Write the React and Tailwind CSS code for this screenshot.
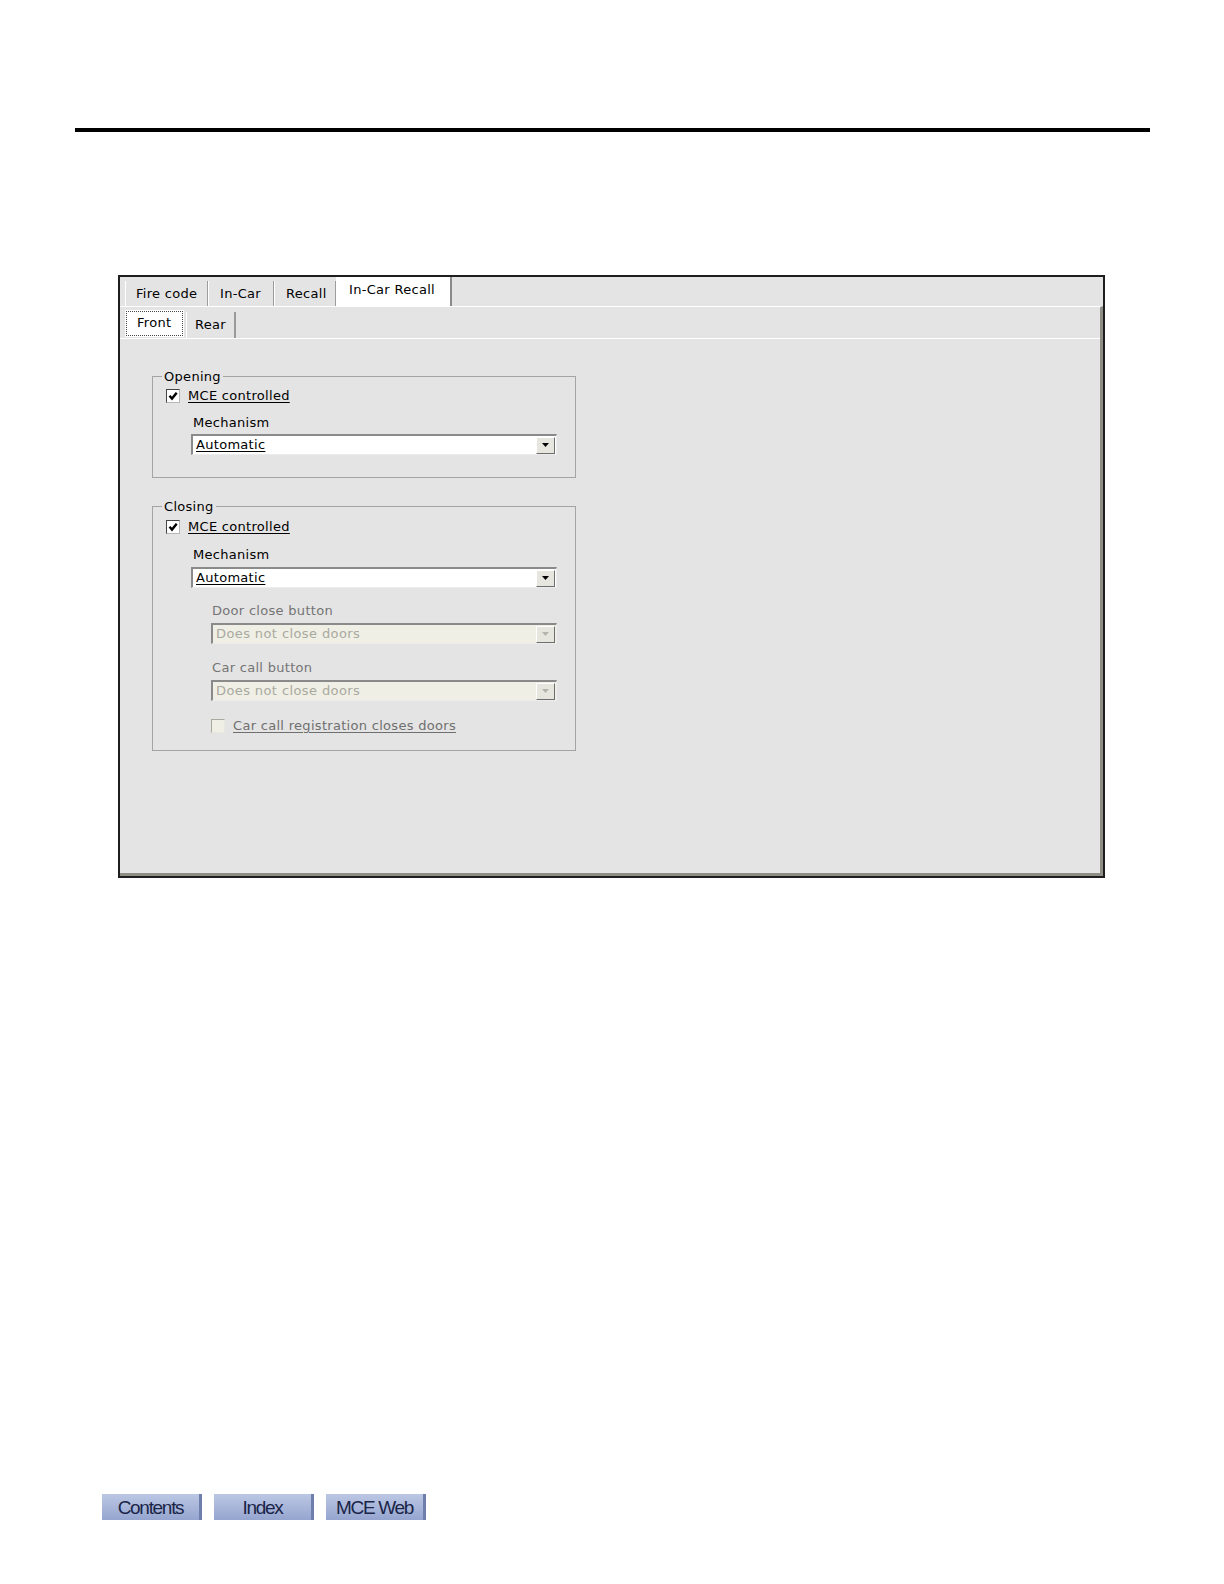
const ui = "font-['DejaVu_Sans','Noto_Sans',sans-serif] text-[13px] leading-[16px]";

function Check({ checked, disabled }) {
  return (
    <span
      className={
        disabled
          ? "flex h-[14px] w-[14px] shrink-0 items-center justify-center border border-[#a8a89e] border-b-[#e8e8e0] border-r-[#e8e8e0] bg-[#efefe5]"
          : "flex h-[14px] w-[14px] shrink-0 items-center justify-center border border-[#444] border-b-[#b5b5b5] border-r-[#b5b5b5] bg-white"
      }
    >
      {checked && (
        <svg width="10" height="10" viewBox="0 0 10 10">
          <path d="M1.5 4.8 L4 7.6 L8.7 1.8" fill="none" stroke="#000" strokeWidth="2.4" />
        </svg>
      )}
    </span>
  );
}

function Combo({ value, disabled, className }) {
  return (
    <div
      className={
        "flex h-[21px] items-center justify-between border border-t-2 border-l-2 border-[#8a8a8a] border-b-[#ececec] border-r-[#ececec] pr-[1px] " +
        (disabled ? "bg-[#efefe5] " : "bg-white ") +
        className
      }
    >
      <span
        className={
          disabled
            ? "pl-[3px] text-[#a9a9a0] tracking-[0.4px]"
            : "pl-[3px] text-black underline underline-offset-2"
        }
      >
        {value}
      </span>
      <span className="flex h-[17px] w-[19px] items-center justify-center border border-white border-b-[#6e6e6e] border-r-[#6e6e6e] bg-[#e6e6de]">
        <svg width="7" height="4" viewBox="0 0 7 4">
          <path d="M0 0 H7 L3.5 4 Z" fill={disabled ? "#b4b4ac" : "#000"} />
        </svg>
      </span>
    </div>
  );
}

function Tab({ label, className, selected }) {
  return (
    <div
      className={
        selected
          ? "flex h-[29px] items-center border-r-2 border-[#8a8a8a] bg-white pb-[3px] " + className
          : "flex h-[25px] items-center border-l border-r border-l-white border-r-[#9c9c9c] " + className
      }
    >
      {label}
    </div>
  );
}

export default function App() {
  return (
    <div className="flex h-[1584px] w-[1224px] flex-col bg-white">
      <div className="ml-[75px] mt-[128px] h-[4px] w-[1075px] bg-black" />

      <div className={"ml-[118px] mt-[143px] flex h-[603px] w-[987px] flex-col border-2 border-[#1e1e1e] bg-[#e4e4e4] " + ui}>
        <div className="flex h-[29px] items-end pl-[5px] tracking-[0.3px]">
          <Tab label="Fire code" className="w-[83px] pl-[10px]" />
          <Tab label="In-Car" className="w-[66px] pl-[11px]" />
          <Tab label="Recall" className="w-[62px] pl-[11px]" />
          <Tab label="In-Car Recall" selected className="w-[116px] pl-[13px]" />
        </div>

        <div className="flex flex-1 flex-col border-t border-r-[3px] border-b-[3px] border-t-white border-r-[#8e8e86] border-b-[#8e8e86]">
          <div className="flex h-[31px] items-end pl-[5px] tracking-[0.3px]">
            <div className="mb-[1px] flex h-[27px] w-[59px] bg-white p-[1px]">
              <div className="flex flex-1 items-center border border-dotted border-[#444] pb-[2px] pl-[10px]">
                Front
              </div>
            </div>
            <div className="ml-[2px] flex h-[26px] w-[50px] items-center border-l border-r-2 border-l-white border-r-[#9a9a9a] pl-[8px]">
              Rear
            </div>
          </div>

          <div className="flex flex-1 flex-col border-t border-white pl-[32px] tracking-[0.3px]">
            <fieldset className="mt-[30px] w-[424px] border border-[#a4a4a4] pb-[22px]">
              <legend className="ml-[9px] px-[2px] leading-[15px]">Opening</legend>
              <div className="mt-[4px] flex h-[16px] items-center gap-[8px] pl-[13px]">
                <Check checked />
                <span className="underline underline-offset-2">MCE controlled</span>
              </div>
              <div className="mt-[11px] h-[16px] pl-[40px]">Mechanism</div>
              <Combo value="Automatic" className="ml-[38px] mt-[3px] w-[366px]" />
            </fieldset>

            <fieldset className="mt-[21px] w-[424px] border border-[#a4a4a4] pb-[16px]">
              <legend className="ml-[9px] px-[2px] leading-[15px]">Closing</legend>
              <div className="mt-[5px] flex h-[16px] items-center gap-[8px] pl-[13px]">
                <Check checked />
                <span className="underline underline-offset-2">MCE controlled</span>
              </div>
              <div className="mt-[12px] h-[16px] pl-[40px]">Mechanism</div>
              <Combo value="Automatic" className="ml-[38px] mt-[4px] w-[366px]" />

              <div className="mt-[15px] h-[16px] pl-[59px] text-[#747474]">Door close button</div>
              <Combo value="Does not close doors" disabled className="ml-[58px] mt-[4px] w-[346px]" />

              <div className="mt-[16px] h-[16px] pl-[59px] text-[#747474]">Car call button</div>
              <Combo value="Does not close doors" disabled className="ml-[58px] mt-[4px] w-[346px]" />

              <div className="mt-[17px] flex h-[16px] items-center gap-[8px] pl-[58px]">
                <Check disabled />
                <span className="text-[#6f6f6f] underline underline-offset-2">
                  Car call registration closes doors
                </span>
              </div>
            </fieldset>
          </div>
        </div>
      </div>

      <div className="ml-[102px] mt-[616px] flex gap-[12px] font-['Liberation_Sans',Arial,sans-serif] text-[19px] tracking-[-1.3px] text-[#1a2548]">
        {["Contents", "Index", "MCE Web"].map((t) => (
          <div
            key={t}
            className="flex h-[26px] w-[100px] items-center justify-center border-r-[3px] border-[#6f7fab] bg-gradient-to-b from-[#bcc7e4] to-[#95a5cf] leading-none"
          >
            {t}
          </div>
        ))}
      </div>
    </div>
  );
}
